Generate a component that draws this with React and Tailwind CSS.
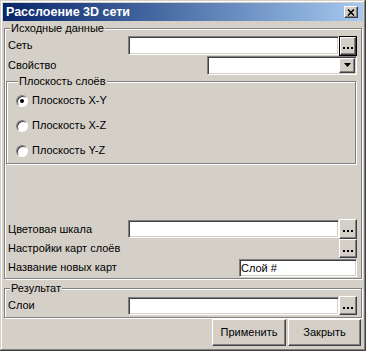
import React, { useState } from "react";

const sunken =
  "bg-white border border-t-[#808080] border-l-[#808080] border-b-white border-r-white shadow-[inset_1px_1px_0_#404040,inset_-1px_-1px_0_#d4d0c8]";
const raised =
  "bg-[#d4d0c8] border border-t-white border-l-white border-b-[#404040] border-r-[#404040] shadow-[inset_-1px_-1px_0_#808080]";
const etched =
  "border border-[#808080] shadow-[inset_1px_1px_0_#fff,1px_1px_0_#fff]";

const Dots = () => (
  <span className="flex gap-[2px] mt-[4px]">
    <span className="w-[2px] h-[2px] bg-black" />
    <span className="w-[2px] h-[2px] bg-black" />
    <span className="w-[2px] h-[2px] bg-black" />
  </span>
);

const BrowseButton = ({ h = "h-[19px]" }) => (
  <button className={`${raised} w-[18px] ${h} flex items-center justify-center`}>
    <Dots />
  </button>
);

const Radio = ({ checked, label, onClick }) => (
  <div className="h-[25px] flex items-center gap-[4px] cursor-default" onClick={onClick}>
    <span className="w-[12px] h-[12px] rounded-full bg-white border border-t-[#808080] border-l-[#808080] border-b-white border-r-white shadow-[inset_1px_1px_0_#404040] flex items-center justify-center">
      {checked && <span className="w-[4px] h-[4px] rounded-full bg-black" />}
    </span>
    <span>{label}</span>
  </div>
);

export default function App() {
  const [plane, setPlane] = useState("X-Y");
  const [layerName, setLayerName] = useState("Слой #");

  return (
    <div className="w-[366px] h-[351px] bg-[#d4d0c8] p-[3px] flex flex-col text-[11px] leading-[13px] text-black font-['Liberation_Sans',Arial,sans-serif] shadow-[inset_-1px_-1px_0_#404040,inset_1px_1px_0_#d4d0c8,inset_-2px_-2px_0_#808080,inset_2px_2px_0_#fff]">
      {/* title bar */}
      <div className="h-[18px] shrink-0 bg-linear-to-r from-[#0a246a] to-[#a6caf0] flex items-center justify-between pl-[3px] pr-[5px]">
        <span className="text-white font-bold text-[12.5px] leading-[14px]">Расслоение 3D сети</span>
        <button className={`${raised} w-[14px] h-[12px] flex items-center justify-center`}>
          <svg width="8" height="7" viewBox="0 0 8 7">
            <path d="M1 0.5 L7 6.5 M7 0.5 L1 6.5" stroke="black" strokeWidth="1.6" />
          </svg>
        </button>
      </div>

      {/* source data */}
      <fieldset className={`${etched} mt-[1px] mx-[1px] pl-[3px] pr-[4px] pb-[1px]`}>
        <legend className="ml-[2px] px-[1px] bg-[#d4d0c8]">Исходные данные</legend>

        <div className="mt-[1px] h-[19px] flex items-center">
          <span className="flex-1">Сеть</span>
          <input className={`${sunken} w-[211px] h-[19px] outline-none px-[2px]`} />
          <button className="w-[18px] h-[20px] border border-black flex items-center justify-center">
            <span className={`${raised} w-full h-full flex items-center justify-center`}>
              <Dots />
            </span>
          </button>
        </div>

        <div className="h-[20px] flex items-center">
          <span className="flex-1">Свойство</span>
          <div className={`${sunken} w-[150px] h-[19px] flex items-center justify-end pr-[1px]`}>
            <span className={`${raised} w-[16px] h-[15px] flex items-center justify-center`}>
              <svg width="7" height="4" viewBox="0 0 7 4">
                <path d="M0 0 H7 L3.5 4 Z" fill="black" />
              </svg>
            </span>
          </div>
        </div>

        <fieldset className={`${etched} -ml-[2px] mr-[1px] pl-[9px]`}>
          <legend className="ml-[2px] px-[1px] bg-[#d4d0c8]">Плоскость слоёв</legend>
          <div className="flex flex-col">
            {["X-Y", "X-Z", "Y-Z"].map((p) => (
              <Radio key={p} label={`Плоскость ${p}`} checked={plane === p} onClick={() => setPlane(p)} />
            ))}
          </div>
        </fieldset>

        <div className="h-[55px]" />

        <div className="h-[20px] flex items-center">
          <span className="flex-1">Цветовая шкала</span>
          <input className={`${sunken} w-[211px] h-[18px] outline-none px-[2px]`} />
          <BrowseButton h="h-[20px]" />
        </div>

        <div className="h-[19px] flex items-center">
          <span className="flex-1">Настройки карт слоёв</span>
          <BrowseButton h="h-[19px]" />
        </div>

        <div className="h-[19px] flex items-center">
          <span className="flex-1">Название новых карт</span>
          <input
            value={layerName}
            onChange={(e) => setLayerName(e.target.value)}
            className={`${sunken} w-[118px] h-[18px] outline-none px-[1px]`}
          />
        </div>
      </fieldset>

      {/* result */}
      <fieldset className={`${etched} mt-[3px] mx-[1px] pl-[3px] pr-[4px] pb-[2px]`}>
        <legend className="ml-[2px] px-[1px] bg-[#d4d0c8]">Результат</legend>
        <div className="mt-[1px] h-[19px] flex items-center">
          <span className="flex-1">Слои</span>
          <input className={`${sunken} w-[211px] h-[18px] outline-none px-[2px]`} />
          <BrowseButton h="h-[19px]" />
        </div>
      </fieldset>

      {/* buttons */}
      <div className="mt-[1px] flex justify-end gap-[2px] pr-[2px]">
        <button className={`${raised} w-[74px] h-[27px]`}>Применить</button>
        <button className={`${raised} w-[73px] h-[27px]`}>Закрыть</button>
      </div>
    </div>
  );
}
